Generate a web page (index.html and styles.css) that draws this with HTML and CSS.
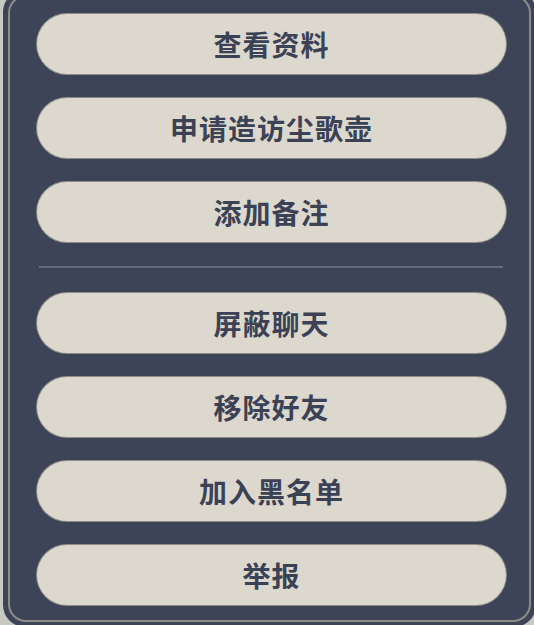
FILE: index.html
```html
<!DOCTYPE html>
<html lang="zh-CN">
<head>
<meta charset="utf-8">
<title>好友菜单</title>
<link rel="stylesheet" href="styles.css">
</head>
<body>
<div class="panel">
  <div class="frame">
    <div class="menu-btn">查看资料</div>
    <div class="menu-btn">申请造访尘歌壶</div>
    <div class="menu-btn">添加备注</div>
    <div class="divider"></div>
    <div class="menu-btn">屏蔽聊天</div>
    <div class="menu-btn">移除好友</div>
    <div class="menu-btn">加入黑名单</div>
    <div class="menu-btn">举报</div>
  </div>
</div>
</body>
</html>
```
FILE: styles.css
```css
html, body {
  margin: 0;
  padding: 0;
  width: 534px;
  height: 625px;
  overflow: hidden;
  background: #c7cac3;
}

.panel {
  margin: -10px 0 0 3px;
  width: 533px;
  height: 637px;
  box-sizing: border-box;
  padding: 5px;
  background: #3d4457;
  border-radius: 22px;
}

.frame {
  height: 100%;
  box-sizing: border-box;
  border: 2px solid #8d8c87;
  border-radius: 18px;
  padding: 17px 23px 0 27px;
  display: flex;
  flex-direction: column;
  gap: 24px;
}

.menu-btn {
  height: 60px;
  flex: none;
  border-radius: 30px;
  background: #dcd8ce;
  box-shadow: 0 0 0 1px rgba(160, 157, 150, 0.8);
  display: flex;
  align-items: center;
  justify-content: center;
  font-family: "Noto Sans CJK SC", "Noto Sans", sans-serif;
  font-weight: 700;
  font-size: 28px;
  letter-spacing: 1px;
  color: #3b4255;
}

.divider {
  flex: none;
  height: 2px;
  margin: 0 3px 1px 2px;
  background: #656a78;
}
```
